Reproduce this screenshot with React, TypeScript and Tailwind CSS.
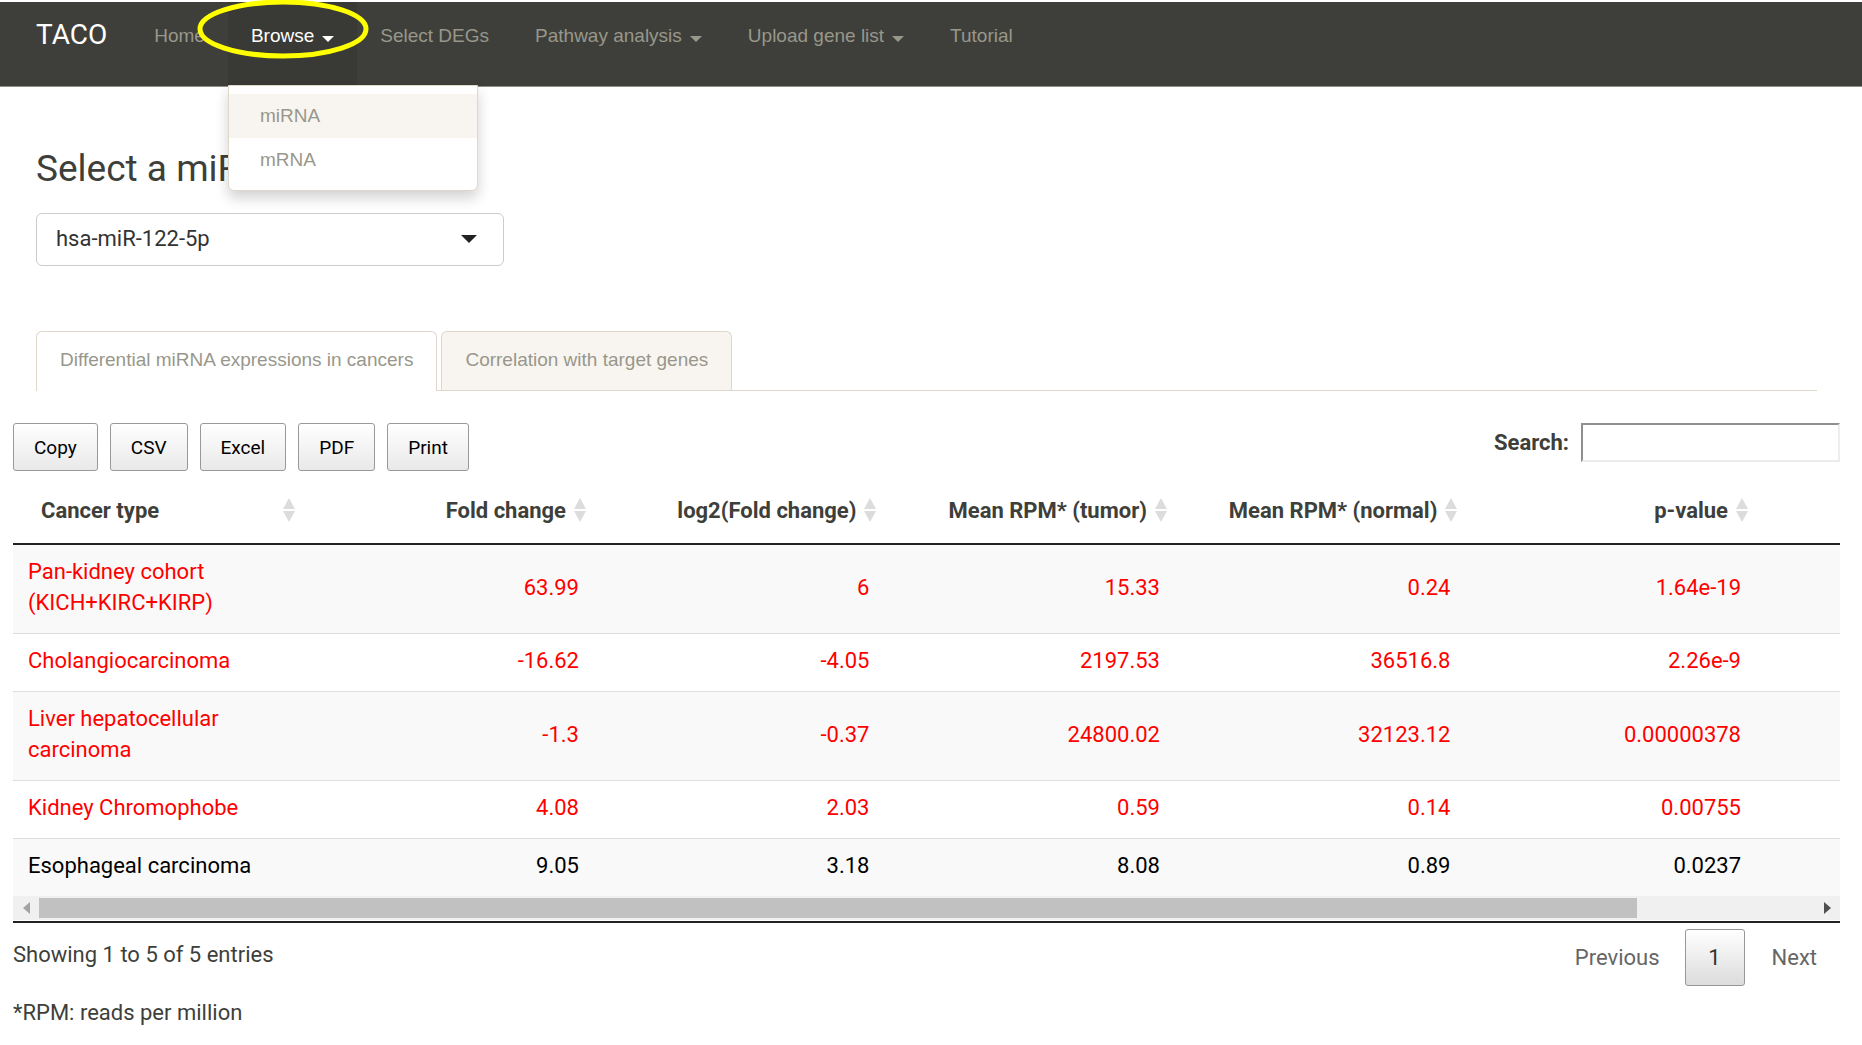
import React, { useState } from "react";

type Row = { name: string; values: string[]; significant: boolean };

const rows: Row[] = [
  { name: "Pan-kidney cohort (KICH+KIRC+KIRP)", values: ["63.99", "6", "15.33", "0.24", "1.64e-19"], significant: true },
  { name: "Cholangiocarcinoma", values: ["-16.62", "-4.05", "2197.53", "36516.8", "2.26e-9"], significant: true },
  { name: "Liver hepatocellular carcinoma", values: ["-1.3", "-0.37", "24800.02", "32123.12", "0.00000378"], significant: true },
  { name: "Kidney Chromophobe", values: ["4.08", "2.03", "0.59", "0.14", "0.00755"], significant: true },
  { name: "Esophageal carcinoma", values: ["9.05", "3.18", "8.08", "0.89", "0.0237"], significant: false },
];

const headers = ["Fold change", "log2(Fold change)", "Mean RPM* (tumor)", "Mean RPM* (normal)", "p-value"];

const exportLabels = ["Copy", "CSV", "Excel", "PDF", "Print"];

function Caret({ className = "" }: { className?: string }) {
  return (
    <svg viewBox="0 0 12 6" className={`h-[6px] w-[12px] ${className}`} fill="currentColor" aria-hidden="true">
      <path d="M0 0h12L6 6z" />
    </svg>
  );
}

function SortIcon() {
  return (
    <svg viewBox="0 0 12 24" className="h-6 w-3 shrink-0 text-[#dcdcdc]" fill="currentColor" aria-hidden="true">
      <path d="M6 0l6 11H0zM0 13h12L6 24z" />
    </svg>
  );
}

function NavBar() {
  const item = "flex h-full items-start gap-2 px-[23px] pt-[22px] whitespace-nowrap";
  return (
    <nav className="mt-[2px] h-[85px] border-b border-[#8f8e88] bg-[#3e3f3a] font-['Liberation_Sans',Arial,sans-serif] text-[19px] leading-6 text-[#98978b]">
      <ul className="flex h-full">
        <li>
          <a href="#top" className="block pt-[17px] pr-6 pl-9 font-[Roboto,sans-serif] text-[28px] leading-8 text-white">
            TACO
          </a>
        </li>
        <li>
          <a href="#home" className={item}>Home</a>
        </li>
        <li className="relative">
          <button type="button" aria-expanded="true" className={`${item} bg-[#393a35] text-white`}>
            Browse
            <Caret className="mt-[12px]" />
          </button>
          <svg
            viewBox="0 0 172 60"
            className="pointer-events-none absolute -top-[2px] -left-[31px] z-20 h-[60px] w-[172px]"
            fill="none"
            aria-hidden="true"
          >
            <ellipse cx="86" cy="29" rx="83" ry="27" stroke="#ffff00" strokeWidth="5" />
          </svg>
          <ul className="absolute top-[83px] left-0 z-10 w-[250px] rounded-b-md border border-[#dfd7ca] bg-white py-2 shadow-[0_7px_14px_rgba(0,0,0,0.18)]">
            <li>
              <a href="#mirna" className="block bg-[#f8f5f0] px-[31px] py-[10px]">miRNA</a>
            </li>
            <li>
              <a href="#mrna" className="block px-[31px] py-[10px]">mRNA</a>
            </li>
          </ul>
        </li>
        <li>
          <a href="#degs" className={item}>Select DEGs</a>
        </li>
        <li>
          <button type="button" className={item}>
            Pathway analysis
            <Caret className="mt-[12px]" />
          </button>
        </li>
        <li>
          <button type="button" className={item}>
            Upload gene list
            <Caret className="mt-[12px]" />
          </button>
        </li>
        <li>
          <a href="#tutorial" className={item}>Tutorial</a>
        </li>
      </ul>
    </nav>
  );
}

function ResultTable() {
  return (
    <table className="w-full table-fixed border-collapse">
      <colgroup>
        <col className="w-[15.9%]" />
        <col className="w-[15.9%]" />
        <col className="w-[15.9%]" />
        <col className="w-[15.9%]" />
        <col className="w-[15.9%]" />
        <col />
      </colgroup>
      <thead>
        <tr className="border-b-2 border-[#222]">
          <th scope="col" className="h-[73px] pt-[6px] pr-2 pl-7 font-bold">
            <span className="flex items-center justify-between">
              Cancer type
              <SortIcon />
            </span>
          </th>
          {headers.map((h) => (
            <th key={h} scope="col" className="h-[73px] pt-[6px] pr-2 font-bold whitespace-nowrap last:pr-[92px]">
              <span className="flex items-center justify-end gap-2">
                {h}
                <SortIcon />
              </span>
            </th>
          ))}
        </tr>
      </thead>
      <tbody>
        {rows.map((row) => (
          <tr
            key={row.name}
            className={`border-b border-[#dddddd] last:border-b-0 odd:bg-[#f9f9f9] ${row.significant ? "text-[#ff0000]" : "text-black"}`}
          >
            <td className="pt-[11px] pr-10 pb-[15px] pl-[15px]">{row.name}</td>
            {row.values.map((v, i) => (
              <td key={i} className="pt-[11px] pr-[15px] pb-[15px] text-right last:pr-[99px]">{v}</td>
            ))}
          </tr>
        ))}
      </tbody>
    </table>
  );
}

function ScrollBar() {
  return (
    <div className="mb-px flex h-[24px] items-center bg-[#f0f0f0]">
      <button type="button" aria-label="Scroll left" className="flex w-[26px] justify-center text-[#a3a3a3]">
        <svg viewBox="0 0 7 12" className="h-3 w-[7px]" fill="currentColor"><path d="M7 0v12L0 6z" /></svg>
      </button>
      <div className="flex-1">
        <div className="h-[20px] w-[90%] bg-[#c1c1c1]" />
      </div>
      <button type="button" aria-label="Scroll right" className="flex w-[26px] justify-center text-[#505050]">
        <svg viewBox="0 0 7 12" className="h-3 w-[7px]" fill="currentColor"><path d="M0 0v12l7-6z" /></svg>
      </button>
    </div>
  );
}

export default function App() {
  const [query, setQuery] = useState("");
  return (
    <div className="min-h-screen bg-white font-[Roboto,sans-serif] text-[22px] leading-[31px] text-[#3e3f3a]">
      <NavBar />
      <main>
        <section className="px-9 pt-[62px]">
          <h1 className="text-[37px] leading-10">Select a miRNA</h1>
          <div className="relative mt-6 w-[468px]">
            <select
              aria-label="Select a miRNA"
              className="h-[53px] w-full appearance-none rounded-md border border-[#cccccc] bg-white px-[19px] pb-[2px] text-[#333]"
            >
              <option>hsa-miR-122-5p</option>
            </select>
            <svg viewBox="0 0 16 8" className="pointer-events-none absolute top-[22px] right-[27px] h-2 w-4 text-[#222]" fill="currentColor" aria-hidden="true">
              <path d="M0 0h16L8 8z" />
            </svg>
          </div>
          <div
            role="tablist"
            className="mt-[65px] mr-[9px] flex gap-1 border-b border-[#dfd7ca] font-['Liberation_Sans',Arial,sans-serif] text-[19px] leading-6 text-[#98978b]"
          >
            <button type="button" role="tab" aria-selected="true" className="-mb-px h-[60px] rounded-t-md border border-b-0 border-[#dfd7ca] bg-white px-[23px] pb-1">
              Differential miRNA expressions in cancers
            </button>
            <button type="button" role="tab" aria-selected="false" className="h-[59px] rounded-t-md border border-b-0 border-[#dfd7ca] bg-[#f8f5f0] px-[23px] pb-[2px]">
              Correlation with target genes
            </button>
          </div>
        </section>
        <section className="mt-8 pr-[22px] pl-[13px]">
          <div className="flex items-start justify-between">
            <div className="flex gap-3">
              {exportLabels.map((label) => (
                <button
                  key={label}
                  type="button"
                  className="h-[48px] rounded-[3px] border border-[#999] bg-linear-to-b from-white to-[#e9e9e9] px-5 text-[19px] text-black"
                >
                  {label}
                </button>
              ))}
            </div>
            <label className="flex items-center gap-3 font-bold">
              Search:
              <input
                type="search"
                value={query}
                onChange={(e) => setQuery(e.target.value)}
                className="h-[39px] w-[259px] border-2 border-t-[#8f8f8f] border-r-[#ededed] border-b-[#ededed] border-l-[#8f8f8f] bg-white px-2 font-normal"
              />
            </label>
          </div>
          <div className="border-b-2 border-[#222]">
            <ResultTable />
            <ScrollBar />
          </div>
          <div className="flex items-start justify-between">
            <p className="pt-4">Showing 1 to 5 of 5 entries</p>
            <div className="flex items-center pt-[6px] text-[#666]">
              <button type="button" className="px-[25px]">Previous</button>
              <button type="button" aria-current="page" className="h-[57px] w-[60px] rounded-[3px] border border-[#979797] bg-linear-to-b from-white to-[#dcdcdc] text-[#333]">
                1
              </button>
              <button type="button" className="pr-[23px] pl-[27px]">Next</button>
            </div>
          </div>
          <p className="mt-[11px]">*RPM: reads per million</p>
        </section>
      </main>
    </div>
  );
}
